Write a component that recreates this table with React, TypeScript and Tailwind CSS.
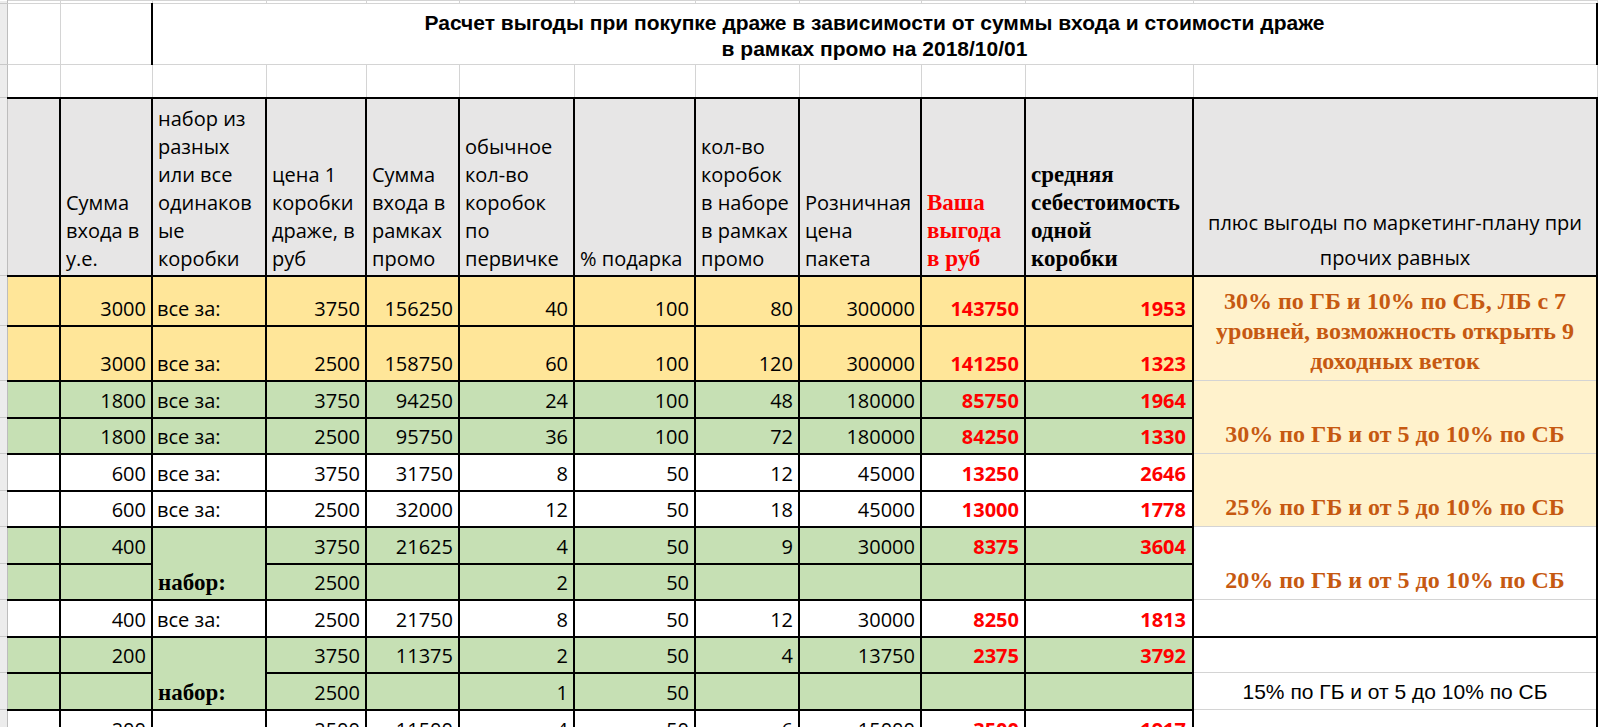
import React from "react";

const Y = "bg-[#ffe699]";
const G = "bg-[#c6e0b4]";
const W = "bg-white";
const LY = "bg-[#fff2cc]";

const sans = "font-['Open_Sans',sans-serif] text-[20px] leading-[28px] text-black";
const serifB = "font-['Liberation_Serif',serif] font-bold text-[23px] leading-[28px]";

const strip = "p-0 bg-[#ececec] border-r border-r-[#bdbdbd] border-b border-b-[#c8c8c8]";
const grid = "p-0 border border-[#d4d4d4]";
const blk = "p-0 border-2 border-black align-bottom";
const colA = "p-0 border-y-2 border-r-2 border-black border-l border-l-[#c8c8c8]";
const colL = "p-0 border-x-2 border-x-black border-y border-y-[#d4d4d4] align-bottom text-center";

type R = {
  h: string;
  bg: string;
  c: string[];
  nabor?: "start" | "skip";
};

const rows: R[] = [
  { h: "h-[50px]", bg: Y, c: ["3000", "все за:", "3750", "156250", "40", "100", "80", "300000", "143750", "1953"] },
  { h: "h-[55px]", bg: Y, c: ["3000", "все за:", "2500", "158750", "60", "100", "120", "300000", "141250", "1323"] },
  { h: "h-[37px]", bg: G, c: ["1800", "все за:", "3750", "94250", "24", "100", "48", "180000", "85750", "1964"] },
  { h: "h-[36px]", bg: G, c: ["1800", "все за:", "2500", "95750", "36", "100", "72", "180000", "84250", "1330"] },
  { h: "h-[37px]", bg: W, c: ["600", "все за:", "3750", "31750", "8", "50", "12", "45000", "13250", "2646"] },
  { h: "h-[36px]", bg: W, c: ["600", "все за:", "2500", "32000", "12", "50", "18", "45000", "13000", "1778"] },
  { h: "h-[37px]", bg: G, nabor: "start", c: ["400", "набор:", "3750", "21625", "4", "50", "9", "30000", "8375", "3604"] },
  { h: "h-[36px]", bg: G, nabor: "skip", c: ["", "", "2500", "", "2", "50", "", "", "", ""] },
  { h: "h-[37px]", bg: W, c: ["400", "все за:", "2500", "21750", "8", "50", "12", "30000", "8250", "1813"] },
  { h: "h-[36px]", bg: G, nabor: "start", c: ["200", "набор:", "3750", "11375", "2", "50", "4", "13750", "2375", "3792"] },
  { h: "h-[37px]", bg: G, nabor: "skip", c: ["", "", "2500", "", "1", "50", "", "", "", ""] },
  { h: "h-[37px]", bg: W, c: ["200", "", "2500", "11500", "4", "50", "6", "15000", "3500", "1917"] },
];

const orange = "font-['Liberation_Serif',serif] font-bold text-[24px] leading-[30px] text-[#c65911] pb-[4px] whitespace-nowrap";

function LCell({ i }: { i: number }) {
  if (i === 0)
    return (
      <td rowSpan={2} className={`${colL} ${LY}`}>
        <div className={orange}>
          30% по ГБ и 10% по СБ, ЛБ с 7<br />уровней, возможность открыть 9<br />доходных веток
        </div>
      </td>
    );
  if (i === 2)
    return (
      <td rowSpan={2} className={`${colL} ${LY}`}>
        <div className={orange}>30% по ГБ и от 5 до 10% по СБ</div>
      </td>
    );
  if (i === 4)
    return (
      <td rowSpan={2} className={`${colL} ${LY}`}>
        <div className={orange}>25% по ГБ и от 5 до 10% по СБ</div>
      </td>
    );
  if (i === 6)
    return (
      <td rowSpan={2} className={`${colL} bg-white`}>
        <div className={orange}>20% по ГБ и от 5 до 10% по СБ</div>
      </td>
    );
  if (i === 8) return <td className={`${colL} bg-white border-b-2 border-b-black`}></td>;
  if (i === 10)
    return (
      <td className={`${colL} bg-white`}>
        <div className="font-['Liberation_Sans',Arial,sans-serif] text-[21px] leading-[28px] text-black pb-[3px] whitespace-nowrap">
          15% по ГБ и от 5 до 10% по СБ
        </div>
      </td>
    );
  if (i === 1 || i === 3 || i === 5 || i === 7) return null;
  return <td className={`${colL} bg-white`}></td>;
}

function Head({ lines, cls = sans, color = "" }: { lines: string[]; cls?: string; color?: string }) {
  return (
    <td className={`${blk} bg-[#e7e6e6] text-left`}>
      <div className={`${cls} ${color} whitespace-nowrap pl-[5px] pb-[2px]`}>
        {lines.map((l, k) => (
          <div key={k}>{l}</div>
        ))}
      </div>
    </td>
  );
}

export default function App() {
  return (
    <div className="w-[1600px] h-[727px] overflow-hidden bg-white">
      <table className="table-fixed border-collapse w-[1600px]">
        <colgroup>
          <col className="w-[7px]" />
          <col className="w-[53px]" />
          <col className="w-[92px]" />
          <col className="w-[114px]" />
          <col className="w-[100px]" />
          <col className="w-[93px]" />
          <col className="w-[115px]" />
          <col className="w-[121px]" />
          <col className="w-[104px]" />
          <col className="w-[122px]" />
          <col className="w-[104px]" />
          <col className="w-[168px]" />
          <col className="w-[404px]" />
          <col className="w-[3px]" />
        </colgroup>
        <tbody>
          <tr className="h-[3px]">
            <td className={strip}></td>
            {Array.from({ length: 12 }).map((_, k) => (
              <td key={k} className={grid}></td>
            ))}
            <td className="p-0"></td>
          </tr>
          <tr className="h-[61px]">
            <td className={strip}></td>
            <td className={grid}></td>
            <td className={grid}></td>
            <td
              colSpan={10}
              className="p-0 border-x-2 border-x-black border-y border-y-[#d4d4d4] align-top text-center pt-[6px]"
            >
              <div className="font-['Liberation_Sans',Arial,sans-serif] font-bold text-[21px] leading-[26px] text-black">
                Расчет выгоды при покупке драже в зависимости от суммы входа и стоимости драже
                <br />в рамках промо на 2018/10/01
              </div>
            </td>
            <td className="p-0"></td>
          </tr>
          <tr className="h-[33px]">
            <td className={strip}></td>
            {Array.from({ length: 12 }).map((_, k) => (
              <td key={k} className={grid}></td>
            ))}
            <td className="p-0"></td>
          </tr>
          <tr className="h-[178px]">
            <td className={strip}></td>
            <td className={`${colA} bg-[#e7e6e6]`}></td>
            <Head lines={["Сумма", "входа в", "у.е."]} />
            <Head lines={["набор из", "разных", "или все", "одинаков", "ые", "коробки"]} />
            <Head lines={["цена 1", "коробки", "драже, в", "руб"]} />
            <Head lines={["Сумма", "входа в", "рамках", "промо"]} />
            <Head lines={["обычное", "кол-во", "коробок", "по", "первичке"]} />
            <Head lines={["% подарка"]} />
            <Head lines={["кол-во", "коробок", "в наборе", "в рамках", "промо"]} />
            <Head lines={["Розничная", "цена", "пакета"]} />
            <Head lines={["Ваша", "выгода", "в руб"]} cls={serifB} color="text-[#ff0000]" />
            <Head lines={["средняя", "себестоимость", "одной", "коробки"]} cls={serifB} color="text-black" />
            <td className={`${blk} bg-[#e7e6e6] text-center`}>
              <div className="font-['Open_Sans',sans-serif] text-[20px] leading-[35px] text-black">
                плюс выгоды по маркетинг-плану при
                <br />
                прочих равных
              </div>
            </td>
            <td className="p-0"></td>
          </tr>
          {rows.map((r, i) => (
            <tr key={i} className={r.h}>
              <td className={strip}></td>
              <td className={`${colA} ${r.bg}`}></td>
              {r.c.map((v, k) => {
                if (k === 1) {
                  if (r.nabor === "skip") return null;
                  if (r.nabor === "start")
                    return (
                      <td key={k} rowSpan={2} className={`${blk} ${r.bg} text-left`}>
                        <div className={`${serifB} text-black pl-[5px] pb-[2px]`}>{v}</div>
                      </td>
                    );
                  return (
                    <td key={k} className={`${blk} ${r.bg} text-left`}>
                      <div className={`${sans} pl-[4px] pb-[2px] whitespace-nowrap`}>{v}</div>
                    </td>
                  );
                }
                const red = k >= 8;
                return (
                  <td key={k} className={`${blk} ${r.bg} text-right`}>
                    <div
                      className={`${
                        red
                          ? "font-['Open_Sans',sans-serif] font-bold text-[20px] leading-[28px] text-[#ff0000]"
                          : sans
                      } ${k === 9 ? "pr-[6px]" : "pr-[5px]"} pb-[2px] whitespace-nowrap`}
                    >
                      {v}
                    </div>
                  </td>
                );
              })}
              <LCell i={i} />
              <td className="p-0"></td>
            </tr>
          ))}
        </tbody>
      </table>
    </div>
  );
}
